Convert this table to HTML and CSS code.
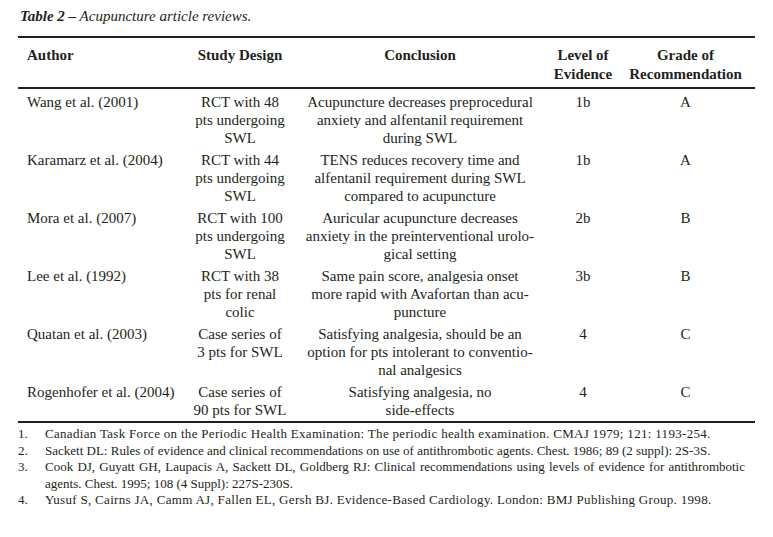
FILE: index.html
```html
<!DOCTYPE html>
<html lang="en">
<head>
<meta charset="utf-8">
<title>Table 2 – Acupuncture article reviews</title>
<link rel="stylesheet" href="styles.css">
</head>
<body>
<div class="page">
  <p class="caption"><span class="caption-label">Table 2 –</span> Acupuncture article reviews.</p>
  <table class="reviews">
    <colgroup>
      <col class="c-author">
      <col class="c-design">
      <col class="c-concl">
      <col class="c-level">
      <col class="c-grade">
    </colgroup>
    <thead>
      <tr>
        <th class="left">Author</th>
        <th>Study Design</th>
        <th>Conclusion</th>
        <th>Level of<br>Evidence</th>
        <th>Grade of<br>Recommendation</th>
      </tr>
    </thead>
    <tbody>
      <tr>
        <td class="left">Wang et al. (2001)</td>
        <td>RCT with 48<br>pts undergoing<br>SWL</td>
        <td>Acupuncture decreases preprocedural<br>anxiety and alfentanil requirement<br>during SWL</td>
        <td>1b</td>
        <td>A</td>
      </tr>
      <tr>
        <td class="left">Karamarz et al. (2004)</td>
        <td>RCT with 44<br>pts undergoing<br>SWL</td>
        <td>TENS reduces recovery time and<br>alfentanil requirement during SWL<br>compared to acupuncture</td>
        <td>1b</td>
        <td>A</td>
      </tr>
      <tr>
        <td class="left">Mora et al. (2007)</td>
        <td>RCT with 100<br>pts undergoing<br>SWL</td>
        <td>Auricular acupuncture decreases<br>anxiety in the preinterventional urolo-<br>gical setting</td>
        <td>2b</td>
        <td>B</td>
      </tr>
      <tr>
        <td class="left">Lee et al. (1992)</td>
        <td>RCT with 38<br>pts for renal<br>colic</td>
        <td>Same pain score, analgesia onset<br>more rapid with Avafortan than acu-<br>puncture</td>
        <td>3b</td>
        <td>B</td>
      </tr>
      <tr>
        <td class="left">Quatan et al. (2003)</td>
        <td>Case series of<br>3 pts for SWL</td>
        <td>Satisfying analgesia, should be an<br>option for pts intolerant to conventio-<br>nal analgesics</td>
        <td>4</td>
        <td>C</td>
      </tr>
      <tr>
        <td class="left">Rogenhofer et al. (2004)</td>
        <td>Case series of<br>90 pts for SWL</td>
        <td>Satisfying analgesia, no<br>side-effects</td>
        <td>4</td>
        <td>C</td>
      </tr>
    </tbody>
  </table>
  <ol class="refs">
    <li><span class="num">1.</span><span class="ref loose">Canadian Task Force on the Periodic Health Examination: The periodic health examination. CMAJ 1979; 121: 1193-254.</span></li>
    <li><span class="num">2.</span><span class="ref">Sackett DL: Rules of evidence and clinical recommendations on use of antithrombotic agents. Chest. 1986; 89 (2 suppl): 2S-3S.</span></li>
    <li><span class="num">3.</span><span class="ref">Cook DJ, Guyatt GH, Laupacis A, Sackett DL, Goldberg RJ: Clinical recommendations using levels of evidence for antithrombotic agents. Chest. 1995; 108 (4 Suppl): 227S-230S.</span></li>
    <li><span class="num">4.</span><span class="ref loose">Yusuf S, Cairns JA, Camm AJ, Fallen EL, Gersh BJ. Evidence-Based Cardiology. London: BMJ Publishing Group. 1998.</span></li>
  </ol>
</div>
</body>
</html>
```

FILE: styles.css
```css
html, body {
  margin: 0;
  padding: 0;
  background: #ffffff;
}

body {
  font-family: "Liberation Serif", "Times New Roman", serif;
  color: #231f20;
}

.page {
  padding: 7px 18px 0 18px;
  width: 737px;
}

.caption {
  margin: 0 0 11px 2px;
  font-size: 15px;
  line-height: 18px;
  font-style: italic;
}

.caption-label {
  font-weight: bold;
}

.reviews {
  width: 737px;
  border-collapse: collapse;
  table-layout: fixed;
  font-size: 15px;
}

.c-author { width: 172px; }
.c-design { width: 100px; }
.c-concl  { width: 260px; }
.c-level  { width: 66px; }
.c-grade  { width: 139px; }

.reviews thead tr {
  border-top: 2px solid #231f20;
  border-bottom: 2px solid #231f20;
}

.reviews th {
  font-weight: bold;
  line-height: 19px;
  padding: 8px 0 3px 0;
  text-align: center;
  vertical-align: top;
}

.reviews td {
  line-height: 18px;
  padding: 2px 0;
  text-align: center;
  vertical-align: top;
}

.reviews tbody tr:first-child td {
  padding-top: 4px;
}

.reviews tbody tr:last-child {
  border-bottom: 2px solid #231f20;
}

.reviews .left {
  text-align: left;
  padding-left: 9px;
}

.refs {
  list-style: none;
  margin: 3px 0 0 0;
  padding: 0 10px 0 0;
  font-size: 13px;
  line-height: 16.6px;
}

.refs li {
  display: grid;
  grid-template-columns: 27px 1fr;
}

.ref {
  text-align: justify;
}

.ref.loose {
  letter-spacing: 0.31px;
}
```
